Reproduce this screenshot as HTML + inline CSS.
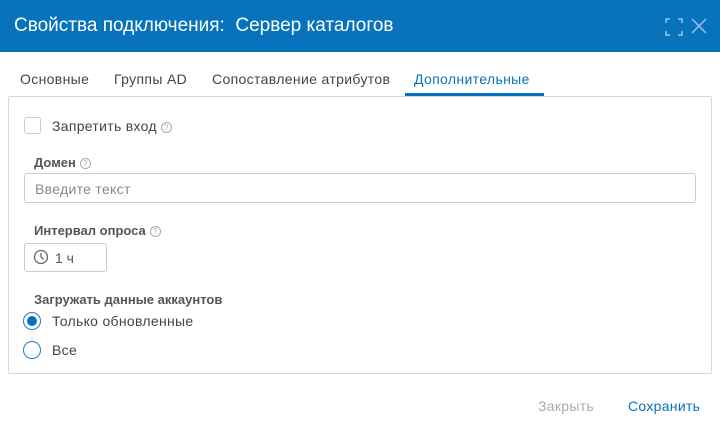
<!DOCTYPE html>
<html><head><meta charset="utf-8"><style>
*{margin:0;padding:0;box-sizing:border-box}
body{width:720px;height:427px;background:#fff;font-family:"Liberation Sans",sans-serif;position:relative;overflow:hidden;color:#444}
.hdr{position:absolute;left:0;top:0;width:720px;height:52px;background:#0773bd}
.title{position:absolute;left:14px;top:15px;color:#fff;font-size:19px}
.t{position:absolute;top:71px;font-size:14px;color:#444;letter-spacing:0.35px}
.ul{position:absolute;left:405px;top:93px;width:139px;height:3px;background:#0773bd}
.panel{position:absolute;left:8px;top:96px;width:704px;height:278px;border:1px solid #d8d8d8;border-radius:2px}
.a{position:absolute}
.lbl{font-size:13px;font-weight:bold;color:#555}
.q{display:inline-block;width:11px;height:11px;border:1px solid #aaa;border-radius:50%;font-size:8px;color:#aaa;text-align:center;line-height:9px;font-weight:normal;vertical-align:1px;margin-left:4px}
.inp{border:1px solid #ccc;border-radius:3px}
.rad{width:18px;height:18px;border:1.5px solid #1a7fc4;border-radius:50%}
.s{letter-spacing:0.3px}
</style></head><body>
<div class="hdr"></div>
<div class="title">Свойства подключения:&nbsp; Сервер каталогов</div>
<svg class="a" style="left:665px;top:18px" width="18" height="18" fill="none" stroke="#9cc4e6" stroke-width="1.5"><path d="M1 5V1h4M13 1h4v4M17 13v4h-4M5 17H1v-4"/></svg>
<svg class="a" style="left:691px;top:18px" width="16" height="16" fill="none" stroke="#9cc4e6" stroke-width="1.5"><path d="M1 1l14 14M15 1L1 15"/></svg>
<div class="t" style="left:20px">Основные</div>
<div class="t" style="left:114px">Группы AD</div>
<div class="t" style="left:212px">Сопоставление атрибутов</div>
<div class="t" style="left:414px;color:#0773bd">Дополнительные</div>
<div class="ul"></div>
<div class="panel"></div>
<div class="a inp" style="left:24px;top:117px;width:17px;height:17px"></div>
<div class="a s" style="left:52px;top:118px;font-size:14px">Запретить вход<span class="q">?</span></div>
<div class="a lbl" style="left:34px;top:155px">Домен<span class="q">?</span></div>
<div class="a inp" style="left:24px;top:173px;width:672px;height:30px"></div>
<div class="a s" style="left:35px;top:181px;font-size:14px;color:#888">Введите текст</div>
<div class="a lbl" style="left:34px;top:223px">Интервал опроса<span class="q">?</span></div>
<div class="a inp" style="left:24px;top:243px;width:83px;height:29px"></div>
<svg class="a" style="left:33px;top:249px" width="16" height="16" fill="none" stroke="#666" stroke-width="1.3"><circle cx="8" cy="8" r="6.5"/><path d="M8 4v4l2.5 2.5"/></svg>
<div class="a" style="left:55px;top:250px;font-size:14px;color:#555">1 ч</div>
<div class="a lbl" style="left:34px;top:292px">Загружать данные аккаунтов</div>
<div class="a rad" style="left:23px;top:312px"><div style="width:10px;height:10px;border-radius:50%;background:#0773bd;margin:2.5px"></div></div>
<div class="a s" style="left:52px;top:313px;font-size:14px">Только обновленные</div>
<div class="a rad" style="left:23px;top:341px"></div>
<div class="a s" style="left:52px;top:342px;font-size:14px">Все</div>
<div class="a s" style="left:538px;top:398px;font-size:14px;color:#aaa">Закрыть</div>
<div class="a s" style="left:628px;top:398px;font-size:14px;color:#0773bd">Сохранить</div>
</body></html>
